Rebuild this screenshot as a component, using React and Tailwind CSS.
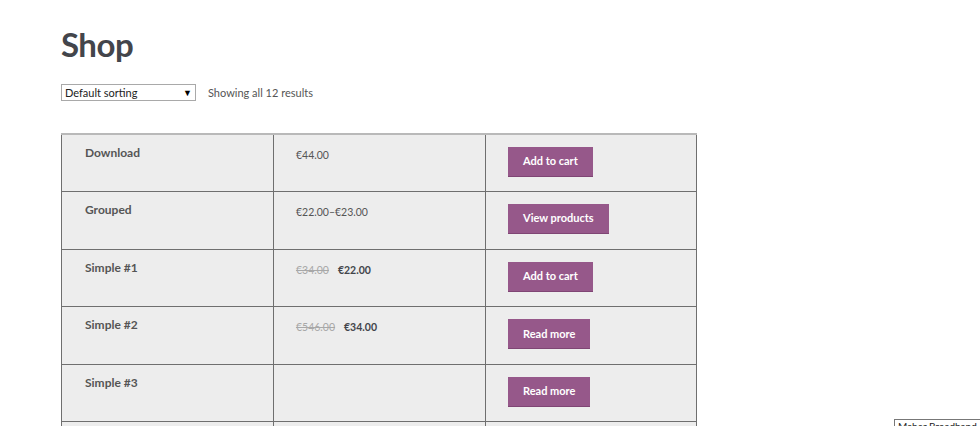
import { useState } from 'react';

const products = [
  { name: 'Download', price: '€44.00', action: 'Add to cart' },
  { name: 'Grouped', price: '€22.00–€23.00', action: 'View products' },
  { name: 'Simple #1', was: '€34.00', price: '€22.00', action: 'Add to cart' },
  { name: 'Simple #2', was: '€546.00', price: '€34.00', action: 'Read more' },
  { name: 'Simple #3', action: 'Read more' },
];

function Price({ p }) {
  if (!p.price) return null;
  if (p.was) {
    return (
      <span className="flex items-center gap-[9px]">
        <del className="text-[#a8a8a8]">{p.was}</del>
        <span className="font-bold text-[#43454b]">{p.price}</span>
      </span>
    );
  }
  return <span>{p.price}</span>;
}

export default function App() {
  const [sort, setSort] = useState('default');

  return (
    <div className="relative h-[426px] overflow-hidden bg-white font-['Lato',sans-serif] text-[#43454b]">
      <div className="pl-[61px] pt-[22px]">
        <h1 className="text-[33px] font-bold leading-[44px] tracking-[-0.5px] text-[#43454b]">Shop</h1>

        <div className="mt-[18px] flex items-center gap-3 text-[11px]">
          <div className="relative w-[135px]">
            <select
              value={sort}
              onChange={(e) => setSort(e.target.value)}
              className="h-[17px] w-full appearance-none rounded-none border border-[#a9a9a9] bg-white pl-[3px] text-[11px] leading-[15px] text-[#222]"
            >
              <option value="default">Default sorting</option>
              <option value="popularity">Sort by popularity</option>
              <option value="price">Sort by price: low to high</option>
            </select>
            <span className="pointer-events-none absolute right-[4px] top-[2px] text-[9px] text-black">▼</span>
          </div>
          <span className="text-[#555]">Showing all 12 results</span>
        </div>

        <div className="mt-[31px] w-[636px] border-t-2 border-t-[#b9b9b9]">
          {products.map((p) => (
            <div
              key={p.name}
              className="grid h-[57.6px] grid-cols-[212px_212px_212px] border-b border-l border-r border-[#6f6f6f] bg-[#ededed] text-[10.5px] text-[#555]"
            >
              <div className="border-r border-[#6f6f6f] pl-[23px] pt-[9px] text-[12px] font-bold text-[#555]">
                {p.name}
              </div>
              <div className="border-r border-[#6f6f6f] pl-[22px] pt-[13px]">
                <Price p={p} />
              </div>
              <div className="pl-[22px] pt-[12px]">
                <button className="h-[30px] border-b border-b-[#7f4574] bg-[#96588a] px-[15px] text-[11px] font-bold text-white">
                  {p.action}
                </button>
              </div>
            </div>
          ))}
          <div className="grid h-[20px] grid-cols-[212px_212px_212px] border-l border-r border-[#6f6f6f] bg-[#ededed]">
            <div className="border-r border-[#6f6f6f]" />
            <div className="border-r border-[#6f6f6f]" />
            <div />
          </div>
        </div>
      </div>

      <div className="fixed left-[894px] top-[419px] whitespace-nowrap border border-[#777] bg-white px-[3px] text-[10px] leading-[12px] text-[#222]">
        Maher Broadband
      </div>
    </div>
  );
}
